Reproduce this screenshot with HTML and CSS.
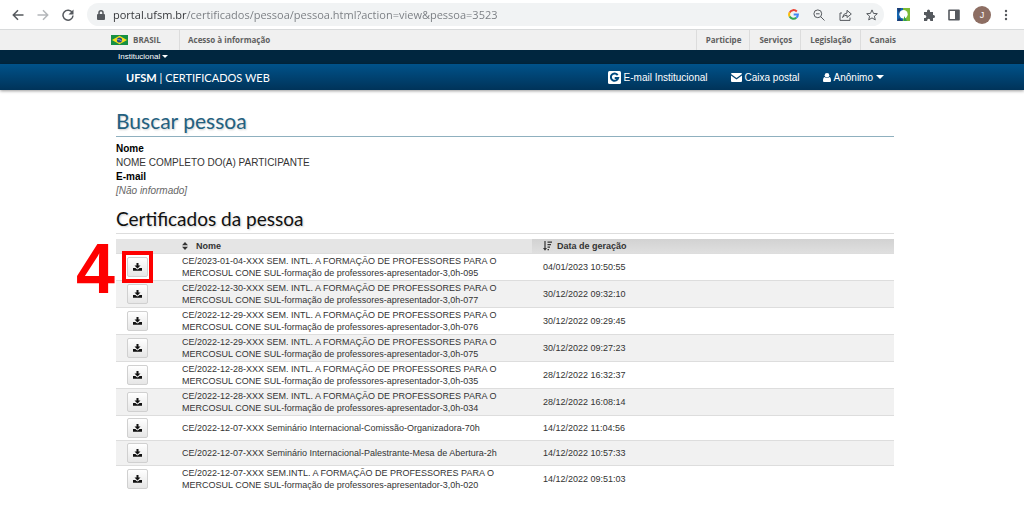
FILE: index.html
```html
<!DOCTYPE html>
<html lang="pt-BR">
<head>
    <meta charset="UTF-8">
    <meta name="viewport" content="width=device-width, initial-scale=1.0">
    <title>Certificados Web - Buscar pessoa</title>
    <link rel="stylesheet" href="styles.css">
</head>
<body>
    <svg class="sprite" aria-hidden="true">
        <symbol id="download" viewBox="0 0 18 16">
            <path d="M7 0h4v5h4L9 11 3 5h4z"/>
            <path d="M0 10h5l2 2q2 1.500 4 0l2-2h5v5.500H0z"/>
        </symbol>
    </svg>

    <!-- Browser toolbar -->
    <div class="toolbar">
        <button class="tool" aria-label="Voltar">
            <svg width="12" height="12" viewBox="0 0 12 12"><path class="line" d="M11.500 6H1.500M6 1.300L1.300 6 6 10.700"/></svg>
        </button>
        <button class="tool muted" aria-label="Avançar">
            <svg width="12" height="12" viewBox="0 0 12 12"><path class="line" d="M.5 6h10M6 1.300L10.700 6 6 10.700"/></svg>
        </button>
        <button class="tool" aria-label="Recarregar">
            <svg width="12" height="12" viewBox="0 0 12 12"><path class="line" d="M10.300 3.600A5 5 0 1 0 11 6.500"/><path d="M11.500.5v5h-5z"/></svg>
        </button>
        <div class="address">
            <svg class="lock" width="8" height="10" viewBox="0 0 8 10"><rect y="4" width="8" height="6" rx="1"/><path class="line" d="M2 4.500V2.800a2 2 0 0 1 4 0v1.700"/></svg>
            <input class="url" type="text" aria-label="Endereço" value="portal.ufsm.br/certificados/pessoa/pessoa.html?action=view&amp;pessoa=3523">
            <button class="tool" aria-label="Google">
                <svg width="11" height="11" viewBox="0 0 12 12" fill="none"><g class="google">
                    <path stroke="#ea4335" d="M9.600 2.700A4.800 4.800 0 0 0 1.800 3.900"/>
                    <path stroke="#fbbc05" d="M1.800 3.700a4.900 4.900 0 0 0 0 4.600"/>
                    <path stroke="#34a853" d="M1.800 8.200a4.800 4.800 0 0 0 7.300 1.300"/>
                    <path stroke="#4285f4" d="M6.200 6h4.600q0 2.200-1.800 3.600"/>
                </g></svg>
            </button>
            <button class="tool" aria-label="Zoom">
                <svg width="12" height="12" viewBox="0 0 12 12"><g class="thin"><circle cx="4.800" cy="4.800" r="3.900"/><path d="M7.700 7.700l3.800 3.800M3 4.800h3.600"/></g></svg>
            </button>
            <button class="tool" aria-label="Compartilhar">
                <svg width="13" height="12" viewBox="0 0 13 12"><path class="thin" d="M3 4H1v7.400h10V8.500M3.500 8.500Q4 4.500 8 4V1.300L12.300 5 8 8.500V6.200Q5.200 6.200 3.500 8.500z"/></svg>
            </button>
            <button class="tool" aria-label="Favoritos">
                <svg width="12" height="12" viewBox="0 0 12 12"><path class="thin" d="M6 .9l1.500 3.500 3.800.3-2.900 2.500.9 3.700L6 8.900l-3.300 2 .9-3.700L.7 4.700l3.800-.3z"/></svg>
            </button>
        </div>
        <button class="tool" aria-label="Extensão">
            <svg width="13" height="13" viewBox="0 0 13 13"><path fill="#1464ae" d="M0 0h7v13H0z"/><path fill="#7dbb35" d="M6 0h7v13H6z"/><circle cx="6.500" cy="6.200" r="4.200" fill="#fff"/><path fill="#1d3c72" d="M0 0h4L2 5zM2 10l4 3H0z"/><path fill="#2d9f55" d="M7 8l3 5H7z"/></svg>
        </button>
        <button class="tool" aria-label="Extensões">
            <svg width="12" height="12" viewBox="0 0 12 12"><path d="M1 3h3V2a1.500 1.500 0 0 1 3 0v1h3v3h.5a1.500 1.500 0 0 1 0 3H10v3H7.200v-.8a1.500 1.500 0 0 0-3 0v.8H1V9h.8a1.500 1.500 0 0 0 0-3H1z"/></svg>
        </button>
        <button class="tool" aria-label="Painel lateral">
            <svg width="12" height="12" viewBox="0 0 12 12"><path fill-rule="evenodd" d="M1 .5h10a1 1 0 0 1 .8 1v9a1 1 0 0 1-.8 1H1a1 1 0 0 1-.8-1v-9A1 1 0 0 1 1 .5zM1.800 2v8H7V2z"/></svg>
        </button>
        <button class="avatar" aria-label="Perfil">J</button>
        <button class="tool" aria-label="Menu">
            <svg width="4" height="12" viewBox="0 0 4 12"><circle cx="2" cy="2" r="1.200"/><circle cx="2" cy="6" r="1.200"/><circle cx="2" cy="10" r="1.200"/></svg>
        </button>
    </div>

    <!-- Government bar -->
    <div class="gov-bar page-row">
        <div class="gov-inner">
            <a class="gov-brasil" href="#">
                <svg width="17" height="10" viewBox="0 0 17 10"><path fill="#169044" d="M0 0h17v10H0z"/><path fill="#f5df19" d="M8.500.8L16 5 8.500 9.200 1 5z"/><circle cx="8.500" cy="5" r="2.600" fill="#214a8c"/><path fill="none" stroke="#c6d8e8" stroke-width=".6" d="M6.200 4.500q2.800-.2 4.600 1.600"/></svg>
                BRASIL
            </a>
            <a class="gov-access" href="#">Acesso à informação</a>
            <nav class="gov-links">
                <a href="#">Participe</a>
                <a href="#">Serviços</a>
                <a href="#">Legislação</a>
                <a href="#">Canais</a>
            </nav>
        </div>
    </div>

    <div class="top-bar page-row">
        <div class="wrap">
            <button class="menu-btn">Institucional <span class="caret"></span></button>
        </div>
    </div>

    <header class="header page-row">
        <div class="wrap header-inner">
            <a class="brand" href="#"><strong>UFSM</strong> | CERTIFICADOS WEB</a>
            <nav class="user-nav">
                <a href="#">
                    <svg width="13" height="13" viewBox="0 0 13 13"><rect width="13" height="13" rx="1.500"/><path fill="none" stroke="#004b80" stroke-width="2" d="M9.700 4.100A3.700 3.700 0 1 0 10.200 6.900H6.700"/></svg>
                    E-mail Institucional
                </a>
                <a href="#">
                    <svg width="11" height="9" viewBox="0 0 11 9"><path d="M0 1q0-1 1-1h9q1 0 1 1L5.500 5z"/><path d="M0 2.500L5.500 6.500 11 2.500V8q0 1-1 1H1Q0 9 0 8z"/></svg>
                    Caixa postal
                </a>
                <button class="user-btn">
                    <svg width="8" height="9" viewBox="0 0 8 9"><circle cx="4" cy="2.300" r="2.300"/><path d="M1.500 4q2.500 2 5 0Q8 4.500 8 8q0 1-1 1H1Q0 9 0 8q0-3.500 1.500-4z"/></svg>
                    Anônimo <span class="caret"></span>
                </button>
            </nav>
        </div>
    </header>

    <main class="page-row">
        <div class="wrap">
            <h1>Buscar pessoa</h1>
            <dl class="person">
                <dt>Nome</dt>
                <dd>NOME COMPLETO DO(A) PARTICIPANTE</dd>
                <dt>E-mail</dt>
                <dd class="empty">[Não informado]</dd>
            </dl>

            <h2>Certificados da pessoa</h2>
            <table class="certificates">
                <thead>
                    <tr>
                        <th class="col-action"></th>
                        <th class="col-name"><svg class="sort" width="6" height="8" viewBox="0 0 6 8"><path d="M0 3.300L3 0l3 3.300zM0 4.700h6L3 8z"/></svg>Nome</th>
                        <th class="col-date sorted"><svg class="sort" width="9" height="10" viewBox="0 0 9 10"><path d="M1.400 0h1.200v7H4L2 9.800 0 7h1.400zM4.500.5H9v1.200H4.500zM4.500 3H8v1.200H4.500zM4.500 5.500H7v1.200H4.500zM4.500 8H6v1.200H4.500z"/></svg>Data de geração</th>
                    </tr>
                </thead>
                <tbody>
                    <tr>
                        <td>
                            <div class="step">
                                <span class="step-number">4</span>
                                <button class="download" aria-label="Baixar certificado"><svg><use href="#download"/></svg></button>
                            </div>
                        </td>
                        <td>CE/2023-01-04-XXX SEM. INTL. A FORMAÇÃO DE PROFESSORES PARA O<br>MERCOSUL CONE SUL-formação de professores-apresentador-3,0h-095</td>
                        <td>04/01/2023 10:50:55</td>
                    </tr>
                    <tr>
                        <td><button class="download" aria-label="Baixar certificado"><svg><use href="#download"/></svg></button></td>
                        <td>CE/2022-12-30-XXX SEM. INTL. A FORMAÇÃO DE PROFESSORES PARA O<br>MERCOSUL CONE SUL-formação de professores-apresentador-3,0h-077</td>
                        <td>30/12/2022 09:32:10</td>
                    </tr>
                    <tr>
                        <td><button class="download" aria-label="Baixar certificado"><svg><use href="#download"/></svg></button></td>
                        <td>CE/2022-12-29-XXX SEM. INTL. A FORMAÇÃO DE PROFESSORES PARA O<br>MERCOSUL CONE SUL-formação de professores-apresentador-3,0h-076</td>
                        <td>30/12/2022 09:29:45</td>
                    </tr>
                    <tr>
                        <td><button class="download" aria-label="Baixar certificado"><svg><use href="#download"/></svg></button></td>
                        <td>CE/2022-12-29-XXX SEM. INTL. A FORMAÇÃO DE PROFESSORES PARA O<br>MERCOSUL CONE SUL-formação de professores-apresentador-3,0h-075</td>
                        <td>30/12/2022 09:27:23</td>
                    </tr>
                    <tr>
                        <td><button class="download" aria-label="Baixar certificado"><svg><use href="#download"/></svg></button></td>
                        <td>CE/2022-12-28-XXX SEM. INTL. A FORMAÇÃO DE PROFESSORES PARA O<br>MERCOSUL CONE SUL-formação de professores-apresentador-3,0h-035</td>
                        <td>28/12/2022 16:32:37</td>
                    </tr>
                    <tr>
                        <td><button class="download" aria-label="Baixar certificado"><svg><use href="#download"/></svg></button></td>
                        <td>CE/2022-12-28-XXX SEM. INTL. A FORMAÇÃO DE PROFESSORES PARA O<br>MERCOSUL CONE SUL-formação de professores-apresentador-3,0h-034</td>
                        <td>28/12/2022 16:08:14</td>
                    </tr>
                    <tr>
                        <td><button class="download" aria-label="Baixar certificado"><svg><use href="#download"/></svg></button></td>
                        <td>CE/2022-12-07-XXX Seminário Internacional-Comissão-Organizadora-70h</td>
                        <td>14/12/2022 11:04:56</td>
                    </tr>
                    <tr>
                        <td><button class="download" aria-label="Baixar certificado"><svg><use href="#download"/></svg></button></td>
                        <td>CE/2022-12-07-XXX Seminário Internacional-Palestrante-Mesa de Abertura-2h</td>
                        <td>14/12/2022 10:57:33</td>
                    </tr>
                    <tr>
                        <td><button class="download" aria-label="Baixar certificado"><svg><use href="#download"/></svg></button></td>
                        <td>CE/2022-12-07-XXX SEM.INTL. A FORMAÇÃO DE PROFESSORES PARA O<br>MERCOSUL CONE SUL-formação de professores-apresentador-3,0h-020</td>
                        <td>14/12/2022 09:51:03</td>
                    </tr>
                </tbody>
            </table>
        </div>
    </main>
</body>
</html>
```
FILE: styles.css
```css
* {
    box-sizing: border-box;
}
body {
    margin: 0;
    font-family: "Liberation Sans", Arial, sans-serif;
    font-size: 10px;
    color: #333;
    background-color: #fff;
}
a {
    color: inherit;
    text-decoration: none;
}
button {
    margin: 0;
    padding: 0;
    border: none;
    background: none;
    font: inherit;
    color: inherit;
    cursor: pointer;
}
svg {
    display: block;
    flex: none;
    fill: currentColor;
}
.sprite {
    position: absolute;
    width: 0;
    height: 0;
}
.line,
.thin,
.google {
    fill: none;
    stroke: currentColor;
}
.line {
    stroke-width: 1.5;
}
.google {
    stroke-width: 2.2;
}

.page-row {
    padding-right: 14px;
}
.wrap {
    max-width: 778px;
    margin: 0 auto;
}

/* Browser toolbar */
.toolbar {
    display: flex;
    align-items: center;
    gap: 13px;
    height: 30px;
    padding: 0 16px 0 12px;
    border-bottom: 1px solid #d8dadb;
    color: #55595e;
}
.toolbar .muted {
    color: #b4b7ba;
}
.address {
    flex: 1;
    display: flex;
    align-items: center;
    gap: 14px;
    height: 23px;
    padding: 0 6px 0 10px;
    border-radius: 12px;
    background-color: #f1f3f4;
}
.lock {
    margin-right: -6px;
}
.url {
    flex: 1;
    min-width: 0;
    padding: 0;
    border: none;
    outline: none;
    font-family: "Open Sans", sans-serif;
    font-size: 11px;
    color: transparent;
    background: linear-gradient(to right, #303236 74px, #777b80 74px);
    -webkit-background-clip: text;
    background-clip: text;
}
.avatar {
    width: 18px;
    height: 18px;
    border-radius: 50%;
    background-color: #8d6e63;
    color: #fff;
    font-size: 9px;
}

/* Government bar */
.gov-bar {
    background-color: #f0f0f0;
    color: #606060;
    font-family: "Open Sans", sans-serif;
    font-size: 8px;
    font-weight: bold;
}
.gov-inner {
    display: flex;
    max-width: 788px;
    margin: 0 auto;
    line-height: 20px;
}
.gov-brasil {
    display: flex;
    align-items: center;
    gap: 5px;
    width: 68px;
}
.gov-access {
    padding-left: 8px;
    border-left: 1px solid #dcdcdc;
}
.gov-links {
    display: flex;
    margin-left: auto;
}
.gov-links a {
    padding: 0 8px 0 9px;
    border-left: 1px solid #dcdcdc;
}
.gov-links a:last-child {
    padding-right: 3px;
}

/* Site header */
.caret {
    display: inline-block;
    border: 3px solid transparent;
    border-top-color: currentColor;
    border-bottom: none;
    vertical-align: middle;
}
.top-bar {
    background-color: #00263f;
    color: #fff;
    line-height: 14px;
}
.menu-btn {
    display: block;
    padding-left: 2px;
    font-size: 8px;
    line-height: 14px;
}
.header {
    background: linear-gradient(#00528a, #003359);
    box-shadow: 0 1px 3px rgba(0, 0, 0, 0.4);
    color: #fff;
}
.header-inner {
    display: flex;
    align-items: center;
    justify-content: space-between;
    height: 26px;
    padding: 0 10px;
}
.brand {
    font-family: Lato, sans-serif;
    font-size: 11px;
}
.user-nav {
    display: flex;
    gap: 23px;
}
.user-nav a,
.user-btn {
    display: flex;
    align-items: center;
    gap: 3px;
}
.user-btn .caret {
    border-width: 4px 4px 0;
}

/* Page content */
h1,
h2 {
    margin: 0;
    font-family: Lato, sans-serif;
    font-weight: normal;
    text-shadow: 1px 1px 2px rgba(0, 0, 0, 0.2);
}
h1 {
    padding-top: 16px;
    border-bottom: 1px solid #8fb0bf;
    font-size: 21px;
    line-height: 30px;
    color: #23607f;
}
.person {
    margin: 5px 0 0;
    line-height: 14px;
}
.person dt {
    font-weight: bold;
    color: #000;
}
.person dd {
    margin: 0;
}
.person .empty {
    font-style: italic;
    color: #666;
}
h2 {
    margin: 7px 0 5px;
    border-bottom: 1px solid #ddd;
    font-size: 19px;
    line-height: 28px;
    color: #111;
}

/* Certificates table */
.certificates {
    width: 100%;
    table-layout: fixed;
    border-collapse: collapse;
    font-size: 9px;
    line-height: 12px;
}
.certificates th {
    height: 14px;
    padding: 0 11px;
    background-color: #e5e5e5;
    text-align: left;
}
.certificates .sorted {
    background: linear-gradient(#d2d2d2, #dfdfdf);
}
.certificates td {
    height: 25px;
    padding: 1px 11px;
    border-top: 1px solid #ddd;
}
.certificates tbody tr:nth-child(even) {
    background-color: #f1f1f1;
}
.certificates .col-action {
    width: 55px;
}
.certificates .col-name {
    width: 361px;
}
.sort {
    display: inline-block;
    margin-right: 8px;
    vertical-align: middle;
}
.sorted .sort {
    margin-right: 5px;
}
.download {
    display: flex;
    align-items: center;
    justify-content: center;
    width: 21px;
    height: 20px;
    border: 1px solid #d0d0d0;
    border-radius: 2px;
    background: linear-gradient(#fff, #e6e6e6);
    color: #111;
}
.download svg {
    width: 9px;
    height: 8px;
}

/* Step marker drawn over the first download button */
.step {
    position: relative;
    width: 21px;
}
.step::after {
    content: "";
    position: absolute;
    inset: -6px -5px;
    border: 4px solid #fe0000;
    pointer-events: none;
}
.step-number {
    position: absolute;
    right: 33px;
    top: -18px;
    font-size: 70px;
    font-weight: bold;
    line-height: 60px;
    color: #fe0000;
}
```
